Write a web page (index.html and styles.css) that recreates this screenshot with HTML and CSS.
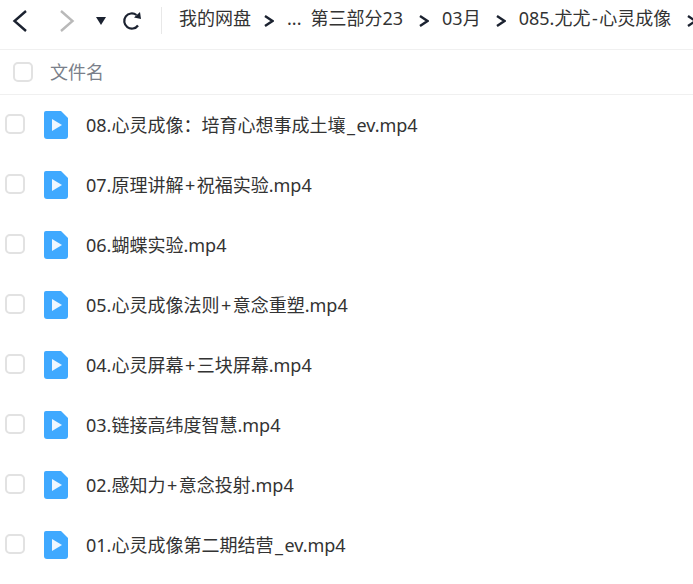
FILE: index.html
```html
<!DOCTYPE html>
<html>
<head>
    <title>我的网盘</title>
    <link rel="stylesheet" href="styles.css">
</head>
<body>
    <div class="topbar">
        <svg class="navBack" width="18" height="24" viewBox="0 0 18 24"><path d="M15 2 L3.5 12 L15 22" fill="none" stroke="#1b2230" stroke-width="2.4"/></svg>
        <svg class="navForward" width="18" height="24" viewBox="0 0 18 24"><path d="M3 2 L14.5 12 L3 22" fill="none" stroke="#b9b9b9" stroke-width="2.4"/></svg>
        <svg class="navDown" width="10" height="8" viewBox="0 0 10 8"><path d="M0 0 H10 L5 8 Z" fill="#1b2230"/></svg>
        <svg class="navRefresh" width="20" height="20" viewBox="0 0 20 20"><path d="M16 14.5 A7.6 7.6 0 1 1 14.5 4" fill="none" stroke="#1b2230" stroke-width="2.2"/><path d="M12 6.5 L19 8 L18 1 Z" fill="#1b2230"/></svg>
        <div class="divider"></div>
        <div class="crumbs">
            <span class="home">我的网盘</span>
            <svg class="sep" width="10" height="12" viewBox="0 0 10 12"><path d="M1 1 L8.5 6 L1 11" fill="none" stroke="#1b2230" stroke-width="2.4"/></svg>
            <span class="dots">...</span>
            <span>第三部分23</span>
            <svg class="sep" width="10" height="12" viewBox="0 0 10 12"><path d="M1 1 L8.5 6 L1 11" fill="none" stroke="#1b2230" stroke-width="2.4"/></svg>
            <span class="month">03月</span>
            <svg class="sep" width="10" height="12" viewBox="0 0 10 12"><path d="M1 1 L8.5 6 L1 11" fill="none" stroke="#1b2230" stroke-width="2.4"/></svg>
            <span>085.尤尤<b class="wide">-</b>心灵成像</span>
            <svg class="sep" width="10" height="12" viewBox="0 0 10 12"><path d="M1 1 L8.5 6 L1 11" fill="none" stroke="#1b2230" stroke-width="2.4"/></svg>
        </div>
    </div>
    <div class="listHead">
        <div class="check"></div>
        <span>文件名</span>
    </div>
    <div class="list">
        <div class="row"><div class="check"></div><svg class="fileIcon" width="24" height="28" viewBox="0 0 24 28"><path d="M2 0 H17 L24 7 V25 Q24 28 21 28 H3 Q0 28 0 25 V2 Q0 0 2 0 Z" fill="#3fa9ff"/><path d="M8 8 L18 14 L8 20 Z" fill="#eef7ff"/></svg><span>08.心灵成像：培育心想事成土壤<b class="wide">_</b>ev.mp4</span></div>
        <div class="row"><div class="check"></div><svg class="fileIcon" width="24" height="28" viewBox="0 0 24 28"><path d="M2 0 H17 L24 7 V25 Q24 28 21 28 H3 Q0 28 0 25 V2 Q0 0 2 0 Z" fill="#3fa9ff"/><path d="M8 8 L18 14 L8 20 Z" fill="#eef7ff"/></svg><span>07.原理讲解<b class="wide">+</b>祝福实验.mp4</span></div>
        <div class="row"><div class="check"></div><svg class="fileIcon" width="24" height="28" viewBox="0 0 24 28"><path d="M2 0 H17 L24 7 V25 Q24 28 21 28 H3 Q0 28 0 25 V2 Q0 0 2 0 Z" fill="#3fa9ff"/><path d="M8 8 L18 14 L8 20 Z" fill="#eef7ff"/></svg><span>06.蝴蝶实验.mp4</span></div>
        <div class="row"><div class="check"></div><svg class="fileIcon" width="24" height="28" viewBox="0 0 24 28"><path d="M2 0 H17 L24 7 V25 Q24 28 21 28 H3 Q0 28 0 25 V2 Q0 0 2 0 Z" fill="#3fa9ff"/><path d="M8 8 L18 14 L8 20 Z" fill="#eef7ff"/></svg><span>05.心灵成像法则<b class="wide">+</b>意念重塑.mp4</span></div>
        <div class="row"><div class="check"></div><svg class="fileIcon" width="24" height="28" viewBox="0 0 24 28"><path d="M2 0 H17 L24 7 V25 Q24 28 21 28 H3 Q0 28 0 25 V2 Q0 0 2 0 Z" fill="#3fa9ff"/><path d="M8 8 L18 14 L8 20 Z" fill="#eef7ff"/></svg><span>04.心灵屏幕<b class="wide">+</b>三块屏幕.mp4</span></div>
        <div class="row"><div class="check"></div><svg class="fileIcon" width="24" height="28" viewBox="0 0 24 28"><path d="M2 0 H17 L24 7 V25 Q24 28 21 28 H3 Q0 28 0 25 V2 Q0 0 2 0 Z" fill="#3fa9ff"/><path d="M8 8 L18 14 L8 20 Z" fill="#eef7ff"/></svg><span>03.链接高纬度智慧.mp4</span></div>
        <div class="row"><div class="check"></div><svg class="fileIcon" width="24" height="28" viewBox="0 0 24 28"><path d="M2 0 H17 L24 7 V25 Q24 28 21 28 H3 Q0 28 0 25 V2 Q0 0 2 0 Z" fill="#3fa9ff"/><path d="M8 8 L18 14 L8 20 Z" fill="#eef7ff"/></svg><span>02.感知力<b class="wide">+</b>意念投射.mp4</span></div>
        <div class="row"><div class="check"></div><svg class="fileIcon" width="24" height="28" viewBox="0 0 24 28"><path d="M2 0 H17 L24 7 V25 Q24 28 21 28 H3 Q0 28 0 25 V2 Q0 0 2 0 Z" fill="#3fa9ff"/><path d="M8 8 L18 14 L8 20 Z" fill="#eef7ff"/></svg><span>01.心灵成像第二期结营<b class="wide">_</b>ev.mp4</span></div>
    </div>
</body>
</html>
```
FILE: styles.css
```css
html, body {
    margin: 0;
    height: 100%;
    overflow: hidden;
}

body {
    background-color: #fff;
    color: #333;
    font-family: 'Noto Sans', 'Noto Sans CJK SC', sans-serif;
    font-size: 18px;
    line-height: 24px;
}

svg {
    flex-shrink: 0;
}

.wide {
    font-weight: normal;
    padding: 0 1.5px;
}

.topbar {
    display: flex;
    align-items: center;
    height: 41px;
    padding: 0 0 8px 11px;
    border-bottom: 1px solid #f0f0f0;
    overflow: hidden;
}

.navForward {
    margin-left: 29px;
}

.navDown {
    margin-left: 20px;
}

.navRefresh {
    margin-left: 16px;
}

.divider {
    flex-shrink: 0;
    width: 1px;
    height: 27px;
    background-color: #e8e8e8;
    margin-left: 19px;
    margin-right: 17px;
}

.crumbs {
    display: flex;
    align-items: center;
    white-space: nowrap;
    flex-shrink: 0;
    gap: 13px;
}

.crumbs span {
    margin-top: -6px;
}

.home {
    margin-right: -3px;
}

.dots {
    margin-right: -4px;
}

.month {
    margin-right: -1px;
}

.sep {
    margin-left: 3px;
}

.listHead {
    display: flex;
    align-items: center;
    height: 44px;
    padding-left: 13px;
    border-bottom: 1px solid #f0f0f0;
    color: #7a7f8a;
}

.listHead .check {
    margin-right: 17px;
}

.check {
    width: 16px;
    height: 16px;
    border: 2px solid #e2e2e2;
    border-radius: 5px;
}

.row {
    display: flex;
    align-items: center;
    height: 60px;
    padding-left: 5px;
}

.row .check {
    margin-top: -2px;
}

.fileIcon {
    margin-left: 19px;
    margin-right: 18px;
}
```
